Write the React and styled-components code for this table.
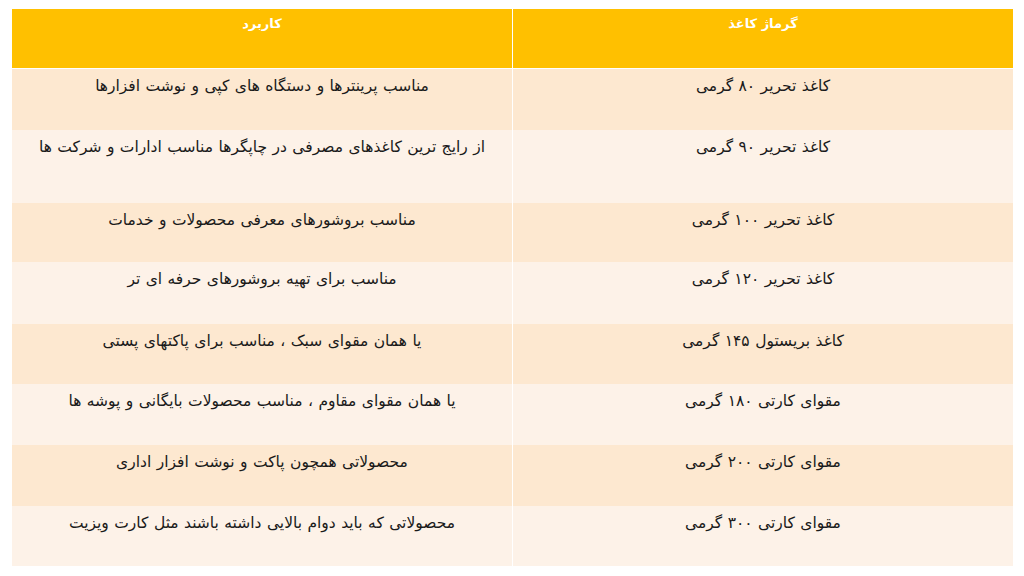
import React from 'react';
import styled, {createGlobalStyle} from 'styled-components';

const GlobalStyle = createGlobalStyle`
  html, body {
    margin: 0;
    padding: 0;
    background: #fff;
  }
  body {
    font-family: "DejaVu Sans", "Liberation Sans", sans-serif;
  }
`

const Page = styled.div`
  width: 1024px;
  height: 576px;
  padding: 9px 11px 0 12px;
  box-sizing: border-box;
`

const Table = styled.table`
  width: 1001px;
  border-collapse: collapse;
  table-layout: fixed;
  direction: rtl;
`

const HeadCell = styled.th`
  height: 59px;
  padding: 7px 0 0;
  box-sizing: border-box;
  vertical-align: top;
  background: #ffc000;
  color: #fff;
  font-size: 13px;
  font-weight: bold;
  border-left: 1px solid #fff;
  border-bottom: 1px solid #fff;

  &:last-child {
    border-left: none;
  }
`

const Row = styled.tr`
  background: ${props => props.$odd ? '#fde8d0' : '#fdf2e8'};
`

const Cell = styled.td`
  height: ${props => props.$h}px;
  padding: 8px 0 0;
  box-sizing: border-box;
  vertical-align: top;
  text-align: center;
  color: #1a1a1a;
  font-size: 15.5px;
  word-spacing: 0.5px;
  border-left: 1px solid #fff;

  &:last-child {
    border-left: none;
  }
`

const rows = [
    {weight: 'کاغذ تحریر ۸۰ گرمی', use: 'مناسب پرینترها و دستگاه های کپی و نوشت افزارها', h: 62},
    {weight: 'کاغذ تحریر ۹۰ گرمی', use: 'از رایج ترین کاغذهای مصرفی در چاپگرها مناسب ادارات و شرکت ها', h: 73},
    {weight: 'کاغذ تحریر ۱۰۰ گرمی', use: 'مناسب بروشورهای معرفی محصولات و خدمات', h: 59},
    {weight: 'کاغذ تحریر ۱۲۰ گرمی', use: 'مناسب برای تهیه بروشورهای حرفه ای تر', h: 62},
    {weight: 'کاغذ بریستول ۱۴۵ گرمی', use: 'یا همان مقوای سبک ، مناسب برای پاکتهای پستی', h: 60},
    {weight: 'مقوای کارتی ۱۸۰ گرمی', use: 'یا همان مقوای مقاوم ، مناسب محصولات بایگانی و پوشه ها', h: 61},
    {weight: 'مقوای کارتی ۲۰۰ گرمی', use: 'محصولاتی همچون پاکت و نوشت افزار اداری', h: 61},
    {weight: 'مقوای کارتی ۳۰۰ گرمی', use: 'محصولاتی که باید دوام بالایی داشته باشند مثل کارت ویزیت', h: 60},
]

export default function App() {
    return (
        <Page>
            <GlobalStyle/>
            <Table>
                <thead>
                <tr>
                    <HeadCell>گرماژ کاغذ</HeadCell>
                    <HeadCell>کاربرد</HeadCell>
                </tr>
                </thead>
                <tbody>
                {rows.map((r, i) => (
                    <Row key={i} $odd={i % 2 === 0}>
                        <Cell $h={r.h}>{r.weight}</Cell>
                        <Cell $h={r.h}>{r.use}</Cell>
                    </Row>
                ))}
                </tbody>
            </Table>
        </Page>
    );
}
